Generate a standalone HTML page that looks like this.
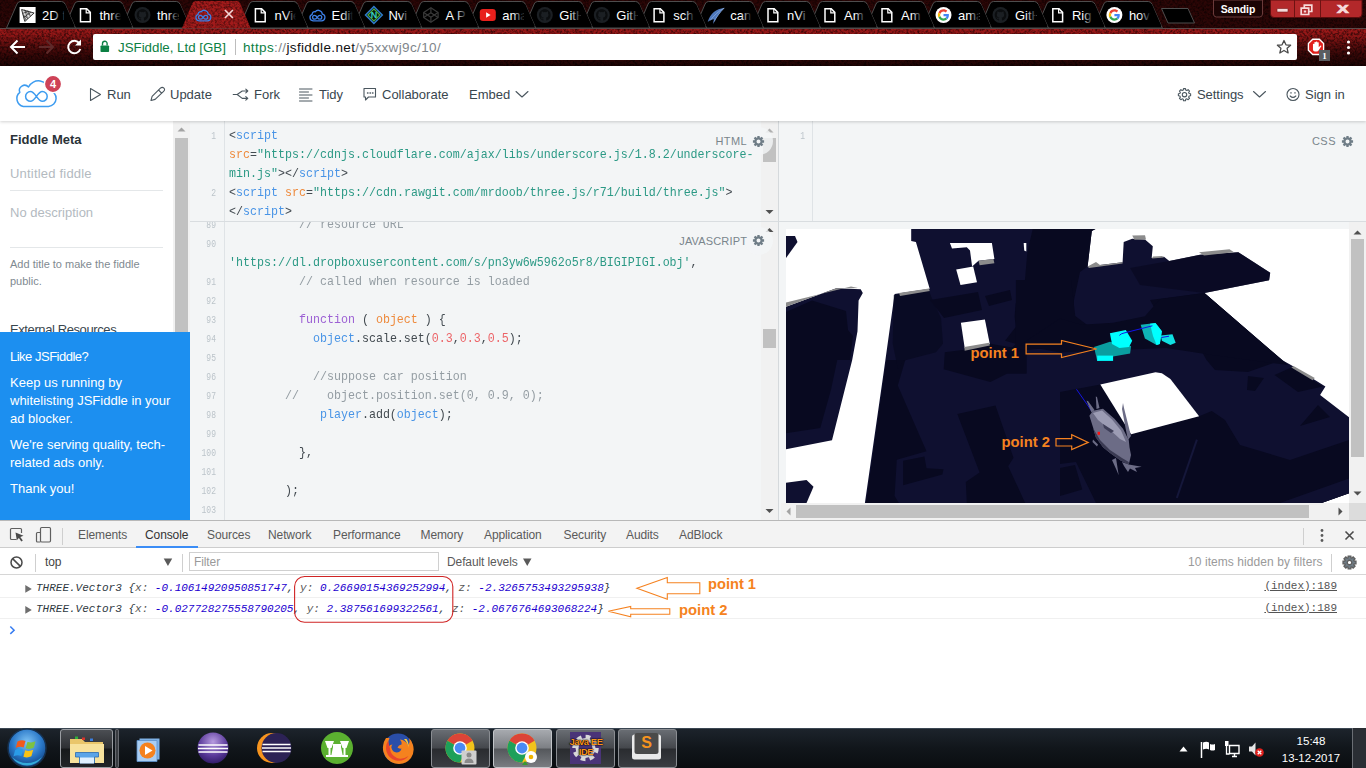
<!DOCTYPE html>
<html lang="en">
<head>
<meta charset="utf-8">
<title>JSFiddle</title>
<style>
*{box-sizing:border-box;margin:0;padding:0}
html,body{width:1366px;height:768px;overflow:hidden;background:#fff;font-family:"Liberation Sans",sans-serif}
.abs{position:absolute}
#root{position:relative;width:1366px;height:768px;overflow:hidden}
/* ---------- browser chrome ---------- */
#tabstrip{left:0;top:0;width:1366px;height:29px;background:#3a0606}
#toolbar{left:0;top:29px;width:1366px;height:37px;background:linear-gradient(#8a1414,#6d0e0e 45%,#4a0808)}
.noise{left:0;top:0;width:1366px;height:66px;opacity:.55;mix-blend-mode:multiply}
#omni{left:93px;top:34px;width:1204px;height:26px;background:#fff;border-radius:2px}
.tabtxt{position:absolute;top:7px;font-size:13px;color:#fff;white-space:nowrap;overflow:hidden}
/* ---------- jsfiddle header ---------- */
#jfhead{left:0;top:66px;width:1366px;height:55px;background:#fff;box-shadow:0 1px 3px rgba(0,0,0,.18);z-index:5}
.nav{position:absolute;top:21px;font-size:13px;color:#39464e;white-space:nowrap}
/* ---------- sidebar ---------- */
#side{left:0;top:121px;width:173px;height:399px;background:#fff;overflow:hidden}
#sidescroll{left:173px;top:121px;width:17px;height:399px;background:#f1f1f1}
#ad{left:0;top:332px;width:190px;height:188px;background:#1c8ff0;color:#fff;font-size:13px;line-height:18px;z-index:3}
/* ---------- editors ---------- */
.panel{background:#f3f5f6;overflow:hidden}
.gutter{position:absolute;left:0;top:0;bottom:0;width:35px;background:#f3f5f6;border-right:1px solid #dfe3e6}
.code{font-family:"Liberation Mono",monospace;font-size:12.7px;line-height:19px;color:#424a50;white-space:pre;transform:scaleX(.9186);transform-origin:0 0}
.ln{position:absolute;left:0;width:26px;text-align:right;font-family:"Liberation Mono",monospace;font-size:10.3px;color:#bcc4ca;line-height:21px;transform:scaleX(.78);transform-origin:100% 0}
.cl{position:absolute;left:39px;height:19px}
.t{color:#4894e6}.a{color:#ee8a3c}.s{color:#2b9985}.k{color:#9c60d4}.c{color:#949da3}.n{color:#ec6468}.v{color:#4894e6}.d{color:#ee8a3c}
.plabel{position:absolute;font-size:11px;letter-spacing:.6px;color:#7a858c}
/* ---------- devtools ---------- */
#dev{left:0;top:520px;width:1366px;height:208px;background:#fff;z-index:6}
.dtab{position:absolute;top:6.5px;letter-spacing:-.1px;font-size:12px;color:#5a5a5a;white-space:nowrap}
.crow{position:absolute;left:0;width:1366px;border-bottom:1px solid #f0f0f0;font-family:"Liberation Mono",monospace;font-size:11px;font-style:italic;color:#303942;white-space:pre}
.num{color:#1c00cf}.key{color:#565656}
.idx{position:absolute;right:29px;font-family:"Liberation Mono",monospace;font-size:11px;color:#545454;text-decoration:underline;font-style:normal}
/* ---------- taskbar ---------- */
#task{left:0;top:728px;width:1366px;height:40px;background:linear-gradient(#4a5866 0,#1c232b 1.5px,#11161b 50%,#0a0d10);z-index:7}
</style>
</head>
<body>
<div id="root">

<!-- ======= BROWSER CHROME ======= -->
<svg class="abs" style="left:0;top:0" width="1366" height="66" viewBox="0 0 1366 66">
<defs>
<filter id="nz" x="0" y="0" width="100%" height="100%"><feTurbulence type="fractalNoise" baseFrequency="0.45" numOctaves="3" seed="7" result="n"/><feColorMatrix type="matrix" values="0 0 0 0 0  0 0 0 0 0  0 0 0 0 0  2.4 0 0 0 -0.9"/></filter>
<linearGradient id="tbg" x1="0" y1="0" x2="0" y2="1"><stop offset="0" stop-color="#a01919"/><stop offset=".18" stop-color="#8e1616"/><stop offset=".42" stop-color="#600e0e"/><stop offset=".68" stop-color="#3a0808"/><stop offset="1" stop-color="#1e0404"/></linearGradient>
<linearGradient id="fade" x1="0" y1="0" x2="1" y2="0"><stop offset="0" stop-color="#000" stop-opacity="0"/><stop offset="1" stop-color="#000"/></linearGradient>
</defs>
<rect x="0" y="0" width="1366" height="29" fill="#2c0606"/>
<rect x="0" y="28.5" width="1366" height="37.5" fill="url(#tbg)"/>
<rect x="0" y="0" width="1366" height="66" filter="url(#nz)" opacity=".6"/>
<path d="M0 28.5H1366" stroke="#5a4a4a" stroke-width="1"/>
<clipPath id="tc0"><path d="M6.5 28 L17.0 4.0 Q18.0 1.5 20.5 1.5 L61.5 1.5 Q64.0 1.5 65.0 4.0 L75.5 28 Z"/></clipPath>
<clipPath id="tc1"><path d="M64.0 28 L74.5 4.0 Q75.5 1.5 78.0 1.5 L119.0 1.5 Q121.5 1.5 122.5 4.0 L132.9 28 Z"/></clipPath>
<clipPath id="tc2"><path d="M121.4 28 L131.9 4.0 Q132.9 1.5 135.4 1.5 L176.4 1.5 Q178.9 1.5 179.9 4.0 L190.4 28 Z"/></clipPath>
<clipPath id="tc3"><path d="M181.8 28.5 L192.3 3.5 Q193.3 1 195.8 1 L236.8 1 Q239.3 1 240.3 3.5 L250.8 28.5 Z"/></clipPath>
<clipPath id="tc4"><path d="M238.9 28 L249.4 4.0 Q250.4 1.5 252.9 1.5 L293.9 1.5 Q296.4 1.5 297.4 4.0 L307.9 28 Z"/></clipPath>
<clipPath id="tc5"><path d="M295.9 28 L306.4 4.0 Q307.4 1.5 309.9 1.5 L350.9 1.5 Q353.4 1.5 354.4 4.0 L364.9 28 Z"/></clipPath>
<clipPath id="tc6"><path d="M352.8 28 L363.3 4.0 Q364.3 1.5 366.8 1.5 L407.8 1.5 Q410.3 1.5 411.3 4.0 L421.8 28 Z"/></clipPath>
<clipPath id="tc7"><path d="M409.8 28 L420.3 4.0 Q421.3 1.5 423.8 1.5 L464.8 1.5 Q467.3 1.5 468.3 4.0 L478.8 28 Z"/></clipPath>
<clipPath id="tc8"><path d="M466.7 28 L477.2 4.0 Q478.2 1.5 480.7 1.5 L521.7 1.5 Q524.2 1.5 525.2 4.0 L535.7 28 Z"/></clipPath>
<clipPath id="tc9"><path d="M523.7 28 L534.2 4.0 Q535.2 1.5 537.7 1.5 L578.7 1.5 Q581.2 1.5 582.2 4.0 L592.7 28 Z"/></clipPath>
<clipPath id="tc10"><path d="M580.7 28 L591.2 4.0 Q592.2 1.5 594.7 1.5 L635.7 1.5 Q638.2 1.5 639.2 4.0 L649.7 28 Z"/></clipPath>
<clipPath id="tc11"><path d="M637.6 28 L648.1 4.0 Q649.1 1.5 651.6 1.5 L692.6 1.5 Q695.1 1.5 696.1 4.0 L706.6 28 Z"/></clipPath>
<clipPath id="tc12"><path d="M694.6 28 L705.1 4.0 Q706.1 1.5 708.6 1.5 L749.6 1.5 Q752.1 1.5 753.1 4.0 L763.6 28 Z"/></clipPath>
<clipPath id="tc13"><path d="M751.5 28 L762.0 4.0 Q763.0 1.5 765.5 1.5 L806.5 1.5 Q809.0 1.5 810.0 4.0 L820.5 28 Z"/></clipPath>
<clipPath id="tc14"><path d="M808.5 28 L819.0 4.0 Q820.0 1.5 822.5 1.5 L863.5 1.5 Q866.0 1.5 867.0 4.0 L877.5 28 Z"/></clipPath>
<clipPath id="tc15"><path d="M865.5 28 L876.0 4.0 Q877.0 1.5 879.5 1.5 L920.5 1.5 Q923.0 1.5 924.0 4.0 L934.5 28 Z"/></clipPath>
<clipPath id="tc16"><path d="M922.4 28 L932.9 4.0 Q933.9 1.5 936.4 1.5 L977.4 1.5 Q979.9 1.5 980.9 4.0 L991.4 28 Z"/></clipPath>
<clipPath id="tc17"><path d="M979.4 28 L989.9 4.0 Q990.9 1.5 993.4 1.5 L1034.4 1.5 Q1036.9 1.5 1037.9 4.0 L1048.4 28 Z"/></clipPath>
<clipPath id="tc18"><path d="M1036.3 28 L1046.8 4.0 Q1047.8 1.5 1050.3 1.5 L1091.3 1.5 Q1093.8 1.5 1094.8 4.0 L1105.3 28 Z"/></clipPath>
<clipPath id="tc19"><path d="M1093.3 28 L1103.8 4.0 Q1104.8 1.5 1107.3 1.5 L1148.3 1.5 Q1150.8 1.5 1151.8 4.0 L1162.3 28 Z"/></clipPath>
<path d="M1093.3 28 L1103.8 4.0 Q1104.8 1.5 1107.3 1.5 L1148.3 1.5 Q1150.8 1.5 1151.8 4.0 L1162.3 28 Z" fill="#000" stroke="#4d4d4d" stroke-width="1"/>
<g clip-path="url(#tc19)">
<g transform="translate(1114.4 15)"><circle r="8" fill="#fff"/><g transform="translate(-5.640 -5.640) scale(.235)"><path fill="#ea4335" d="M24 9.500c3.540 0 6.710 1.220 9.210 3.600l6.850-6.850C35.900 2.380 30.470 0 24 0 14.620 0 6.510 5.380 2.560 13.220l7.980 6.190C12.430 13.720 17.740 9.500 24 9.500z"/><path fill="#4285f4" d="M46.980 24.550c0-1.570-.150-3.090-.380-4.550H24v9.020h12.940c-.580 2.960-2.260 5.480-4.780 7.180l7.730 6c4.510-4.180 7.090-10.360 7.090-17.650z"/><path fill="#fbbc05" d="M10.530 28.590c-.480-1.450-.760-2.990-.760-4.590s.270-3.140.760-4.590l-7.980-6.190C.920 16.460 0 20.120 0 24c0 3.880.920 7.540 2.560 10.780l7.970-6.190z"/><path fill="#34a853" d="M24 48c6.480 0 11.930-2.130 15.890-5.810l-7.730-6c-2.150 1.450-4.920 2.300-8.160 2.300-6.260 0-11.570-4.220-13.470-9.910l-7.980 6.190C6.510 42.620 14.620 48 24 48z"/></g></g>
<text x="1128.9" y="19.5" font-size="13" fill="#fff" font-family="Liberation Sans,sans-serif">hov</text>
<rect x="1139.4" y="4" width="11" height="22" fill="url(#fade)"/>
<rect x="1150.4" y="4" width="30" height="22" fill="#000"/>
</g>
<path d="M1036.3 28 L1046.8 4.0 Q1047.8 1.5 1050.3 1.5 L1091.3 1.5 Q1093.8 1.5 1094.8 4.0 L1105.3 28 Z" fill="#000" stroke="#4d4d4d" stroke-width="1"/>
<g clip-path="url(#tc18)">
<path d="M1052.8 8.800h6.200l3.600 3.600v9.400h-9.800z" fill="none" stroke="#fff" stroke-width="1.500" stroke-linejoin="miter"/><path d="M1058.6 8.800v4h4" fill="none" stroke="#fff" stroke-width="1.200"/>
<text x="1071.9" y="19.5" font-size="13" fill="#fff" font-family="Liberation Sans,sans-serif">Rig</text>
<rect x="1082.4" y="4" width="11" height="22" fill="url(#fade)"/>
<rect x="1093.4" y="4" width="30" height="22" fill="#000"/>
</g>
<path d="M979.4 28 L989.9 4.0 Q990.9 1.5 993.4 1.5 L1034.4 1.5 Q1036.9 1.5 1037.9 4.0 L1048.4 28 Z" fill="#000" stroke="#4d4d4d" stroke-width="1"/>
<g clip-path="url(#tc17)">
<g transform="translate(992.5 7)"><circle cx="8" cy="8" r="8" fill="#1b1f23"/><path d="M8 2.200c-3.200 0-5.800 2.600-5.800 5.800 0 2.600 1.700 4.700 4 5.500.3.050.4-.13.4-.28v-1c-1.600.35-2-.77-2-.77-.26-.67-.64-.85-.64-.85-.52-.36.040-.35.040-.35.580.040.890.600.890.600.520.890 1.350.630 1.680.480.050-.370.200-.630.360-.770-1.290-.150-2.640-.640-2.640-2.860 0-.630.230-1.150.600-1.550-.060-.150-.260-.740.060-1.530 0 0 .490-.160 1.600.600a5.500 5.500 0 0 1 2.900 0c1.100-.750 1.600-.600 1.600-.600.320.800.120 1.390.060 1.530.370.400.600.920.600 1.550 0 2.230-1.360 2.720-2.650 2.860.210.180.390.530.390 1.070v1.590c0 .150.100.330.400.280a5.800 5.800 0 0 0 4-5.500c0-3.200-2.600-5.800-5.800-5.800z" fill="#0b0d0f"/></g>
<text x="1015.0" y="19.5" font-size="13" fill="#fff" font-family="Liberation Sans,sans-serif">GitH</text>
<rect x="1025.5" y="4" width="11" height="22" fill="url(#fade)"/>
<rect x="1036.5" y="4" width="30" height="22" fill="#000"/>
</g>
<path d="M922.4 28 L932.9 4.0 Q933.9 1.5 936.4 1.5 L977.4 1.5 Q979.9 1.5 980.9 4.0 L991.4 28 Z" fill="#000" stroke="#4d4d4d" stroke-width="1"/>
<g clip-path="url(#tc16)">
<g transform="translate(943.5 15)"><circle r="8" fill="#fff"/><g transform="translate(-5.640 -5.640) scale(.235)"><path fill="#ea4335" d="M24 9.500c3.540 0 6.710 1.220 9.210 3.600l6.850-6.850C35.900 2.380 30.470 0 24 0 14.620 0 6.510 5.380 2.560 13.220l7.980 6.190C12.430 13.720 17.740 9.500 24 9.500z"/><path fill="#4285f4" d="M46.980 24.550c0-1.570-.150-3.090-.380-4.550H24v9.020h12.940c-.580 2.960-2.260 5.480-4.780 7.180l7.730 6c4.510-4.180 7.090-10.360 7.090-17.650z"/><path fill="#fbbc05" d="M10.530 28.590c-.480-1.450-.760-2.990-.760-4.590s.270-3.140.760-4.590l-7.980-6.190C.920 16.460 0 20.120 0 24c0 3.880.920 7.540 2.560 10.780l7.970-6.190z"/><path fill="#34a853" d="M24 48c6.480 0 11.930-2.130 15.890-5.810l-7.730-6c-2.150 1.450-4.920 2.300-8.160 2.300-6.260 0-11.570-4.220-13.470-9.910l-7.980 6.190C6.510 42.620 14.620 48 24 48z"/></g></g>
<text x="958.0" y="19.5" font-size="13" fill="#fff" font-family="Liberation Sans,sans-serif">ama</text>
<rect x="968.5" y="4" width="11" height="22" fill="url(#fade)"/>
<rect x="979.5" y="4" width="30" height="22" fill="#000"/>
</g>
<path d="M865.5 28 L876.0 4.0 Q877.0 1.5 879.5 1.5 L920.5 1.5 Q923.0 1.5 924.0 4.0 L934.5 28 Z" fill="#000" stroke="#4d4d4d" stroke-width="1"/>
<g clip-path="url(#tc15)">
<path d="M882.0 8.800h6.200l3.600 3.600v9.400h-9.800z" fill="none" stroke="#fff" stroke-width="1.500" stroke-linejoin="miter"/><path d="M887.8 8.800v4h4" fill="none" stroke="#fff" stroke-width="1.200"/>
<text x="901.1" y="19.5" font-size="13" fill="#fff" font-family="Liberation Sans,sans-serif">Am</text>
<rect x="911.6" y="4" width="11" height="22" fill="url(#fade)"/>
<rect x="922.6" y="4" width="30" height="22" fill="#000"/>
</g>
<path d="M808.5 28 L819.0 4.0 Q820.0 1.5 822.5 1.5 L863.5 1.5 Q866.0 1.5 867.0 4.0 L877.5 28 Z" fill="#000" stroke="#4d4d4d" stroke-width="1"/>
<g clip-path="url(#tc14)">
<path d="M825.0 8.800h6.200l3.600 3.600v9.400h-9.800z" fill="none" stroke="#fff" stroke-width="1.500" stroke-linejoin="miter"/><path d="M830.8 8.800v4h4" fill="none" stroke="#fff" stroke-width="1.200"/>
<text x="844.1" y="19.5" font-size="13" fill="#fff" font-family="Liberation Sans,sans-serif">Am</text>
<rect x="854.6" y="4" width="11" height="22" fill="url(#fade)"/>
<rect x="865.6" y="4" width="30" height="22" fill="#000"/>
</g>
<path d="M751.5 28 L762.0 4.0 Q763.0 1.5 765.5 1.5 L806.5 1.5 Q809.0 1.5 810.0 4.0 L820.5 28 Z" fill="#000" stroke="#4d4d4d" stroke-width="1"/>
<g clip-path="url(#tc13)">
<path d="M768.0 8.800h6.200l3.600 3.600v9.400h-9.800z" fill="none" stroke="#fff" stroke-width="1.500" stroke-linejoin="miter"/><path d="M773.8 8.800v4h4" fill="none" stroke="#fff" stroke-width="1.200"/>
<text x="787.1" y="19.5" font-size="13" fill="#fff" font-family="Liberation Sans,sans-serif">nVi</text>
<rect x="797.6" y="4" width="11" height="22" fill="url(#fade)"/>
<rect x="808.6" y="4" width="30" height="22" fill="#000"/>
</g>
<path d="M694.6 28 L705.1 4.0 Q706.1 1.5 708.6 1.5 L749.6 1.5 Q752.1 1.5 753.1 4.0 L763.6 28 Z" fill="#000" stroke="#4d4d4d" stroke-width="1"/>
<g clip-path="url(#tc12)">
<g transform="translate(706.7 6.500)"><path d="M17.500 1.500C9.500 2 3.500 7 1 15.500c2.200-1.700 4.300-2.500 6.300-2.700C6.700 14.500 6.500 16 6.600 17.500 9.500 11 13.500 5.500 17.500 1.500z" fill="#4f79bd"/><path d="M17.500 1.500C12 4.500 7 9 3.500 14M17.500 1.500C13 6 9.500 11 7.500 15" stroke="#8fb0e0" stroke-width=".7" fill="none"/></g>
<text x="730.2" y="19.5" font-size="13" fill="#fff" font-family="Liberation Sans,sans-serif">can</text>
<rect x="740.7" y="4" width="11" height="22" fill="url(#fade)"/>
<rect x="751.7" y="4" width="30" height="22" fill="#000"/>
</g>
<path d="M637.6 28 L648.1 4.0 Q649.1 1.5 651.6 1.5 L692.6 1.5 Q695.1 1.5 696.1 4.0 L706.6 28 Z" fill="#000" stroke="#4d4d4d" stroke-width="1"/>
<g clip-path="url(#tc11)">
<path d="M654.1 8.800h6.200l3.600 3.600v9.400h-9.800z" fill="none" stroke="#fff" stroke-width="1.500" stroke-linejoin="miter"/><path d="M659.9 8.800v4h4" fill="none" stroke="#fff" stroke-width="1.200"/>
<text x="673.2" y="19.5" font-size="13" fill="#fff" font-family="Liberation Sans,sans-serif">sch</text>
<rect x="683.7" y="4" width="11" height="22" fill="url(#fade)"/>
<rect x="694.7" y="4" width="30" height="22" fill="#000"/>
</g>
<path d="M580.7 28 L591.2 4.0 Q592.2 1.5 594.7 1.5 L635.7 1.5 Q638.2 1.5 639.2 4.0 L649.7 28 Z" fill="#000" stroke="#4d4d4d" stroke-width="1"/>
<g clip-path="url(#tc10)">
<g transform="translate(593.8 7)"><circle cx="8" cy="8" r="8" fill="#1b1f23"/><path d="M8 2.200c-3.200 0-5.800 2.600-5.800 5.800 0 2.600 1.700 4.700 4 5.500.3.050.4-.13.4-.28v-1c-1.600.35-2-.77-2-.77-.26-.67-.64-.85-.64-.85-.52-.36.040-.35.040-.35.580.040.890.600.890.600.520.890 1.350.630 1.680.480.050-.370.200-.630.360-.770-1.290-.150-2.640-.640-2.640-2.860 0-.630.230-1.150.600-1.550-.060-.150-.260-.740.060-1.530 0 0 .490-.160 1.600.600a5.500 5.500 0 0 1 2.900 0c1.100-.750 1.600-.600 1.600-.600.320.800.120 1.390.060 1.530.370.400.600.920.600 1.550 0 2.230-1.360 2.720-2.650 2.860.210.180.390.530.390 1.070v1.590c0 .150.100.330.400.280a5.800 5.800 0 0 0 4-5.500c0-3.200-2.600-5.800-5.800-5.800z" fill="#0b0d0f"/></g>
<text x="616.3" y="19.5" font-size="13" fill="#fff" font-family="Liberation Sans,sans-serif">GitH</text>
<rect x="626.8" y="4" width="11" height="22" fill="url(#fade)"/>
<rect x="637.8" y="4" width="30" height="22" fill="#000"/>
</g>
<path d="M523.7 28 L534.2 4.0 Q535.2 1.5 537.7 1.5 L578.7 1.5 Q581.2 1.5 582.2 4.0 L592.7 28 Z" fill="#000" stroke="#4d4d4d" stroke-width="1"/>
<g clip-path="url(#tc9)">
<g transform="translate(536.8 7)"><circle cx="8" cy="8" r="8" fill="#1b1f23"/><path d="M8 2.200c-3.200 0-5.800 2.600-5.800 5.800 0 2.600 1.700 4.700 4 5.500.3.050.4-.13.4-.28v-1c-1.600.35-2-.77-2-.77-.26-.67-.64-.85-.64-.85-.52-.36.040-.35.040-.35.580.040.890.600.890.600.520.890 1.350.630 1.680.480.050-.370.200-.630.360-.770-1.290-.150-2.640-.640-2.640-2.860 0-.630.230-1.150.600-1.550-.060-.150-.260-.740.060-1.530 0 0 .490-.160 1.600.600a5.500 5.500 0 0 1 2.900 0c1.100-.750 1.600-.600 1.600-.600.320.800.120 1.390.060 1.530.370.400.600.920.600 1.550 0 2.230-1.360 2.720-2.650 2.860.210.180.390.530.390 1.070v1.590c0 .150.100.330.400.280a5.800 5.800 0 0 0 4-5.500c0-3.200-2.600-5.800-5.800-5.800z" fill="#0b0d0f"/></g>
<text x="559.3" y="19.5" font-size="13" fill="#fff" font-family="Liberation Sans,sans-serif">GitH</text>
<rect x="569.8" y="4" width="11" height="22" fill="url(#fade)"/>
<rect x="580.8" y="4" width="30" height="22" fill="#000"/>
</g>
<path d="M466.7 28 L477.2 4.0 Q478.2 1.5 480.7 1.5 L521.7 1.5 Q524.2 1.5 525.2 4.0 L535.7 28 Z" fill="#000" stroke="#4d4d4d" stroke-width="1"/>
<g clip-path="url(#tc8)">
<g transform="translate(479.8 9)"><rect width="16" height="12" rx="3.200" fill="#e8201c"/><path d="M6.300 3.200 10.800 6 6.300 8.800z" fill="#fff"/></g>
<text x="502.3" y="19.5" font-size="13" fill="#fff" font-family="Liberation Sans,sans-serif">ama</text>
<rect x="512.8" y="4" width="11" height="22" fill="url(#fade)"/>
<rect x="523.8" y="4" width="30" height="22" fill="#000"/>
</g>
<path d="M409.8 28 L420.3 4.0 Q421.3 1.5 423.8 1.5 L464.8 1.5 Q467.3 1.5 468.3 4.0 L478.8 28 Z" fill="#000" stroke="#4d4d4d" stroke-width="1"/>
<g clip-path="url(#tc7)">
<g transform="translate(422.9 7)" fill="none" stroke="#3a3a3a" stroke-width="1.200" stroke-linejoin="round"><path d="M8 .8 15.200 5.500v5L8 15.200.8 10.500v-5z"/><path d="M.8 5.500 8 10.200l7.200-4.700M.8 10.500 8 5.800l7.200 4.700M8 .8v5M8 10.200v5"/></g>
<text x="445.4" y="19.5" font-size="13" fill="#fff" font-family="Liberation Sans,sans-serif">A P</text>
<rect x="455.9" y="4" width="11" height="22" fill="url(#fade)"/>
<rect x="466.9" y="4" width="30" height="22" fill="#000"/>
</g>
<path d="M352.8 28 L363.3 4.0 Q364.3 1.5 366.8 1.5 L407.8 1.5 Q410.3 1.5 411.3 4.0 L421.8 28 Z" fill="#000" stroke="#4d4d4d" stroke-width="1"/>
<g clip-path="url(#tc6)">
<g transform="translate(373.9 15)"><path d="M0-8.500 8.500 0 0 8.500-8.500 0z" fill="#0c1c2c" stroke="#2f7fd0" stroke-width="1.300"/><path d="M0-6 6 0 0 6-6 0z" fill="#08140c" stroke="#4cae3a" stroke-width="1.100"/><text x="0" y="3.400" font-size="9" font-weight="bold" fill="#3ad0c0" text-anchor="middle" font-family="Liberation Sans,sans-serif">N</text></g>
<text x="388.4" y="19.5" font-size="13" fill="#fff" font-family="Liberation Sans,sans-serif">Nvi</text>
<rect x="398.9" y="4" width="11" height="22" fill="url(#fade)"/>
<rect x="409.9" y="4" width="30" height="22" fill="#000"/>
</g>
<path d="M295.9 28 L306.4 4.0 Q307.4 1.5 309.9 1.5 L350.9 1.5 Q353.4 1.5 354.4 4.0 L364.9 28 Z" fill="#000" stroke="#4d4d4d" stroke-width="1"/>
<g clip-path="url(#tc5)">
<g transform="translate(309.0 7.5)" fill="none" stroke="#3d7fe6" stroke-width="1.3" stroke-linecap="round" stroke-linejoin="round"><path d="M4 13.3A3.3 3.3 0 0 1 3.2 6.9A2.4 2.4 0 0 1 6.2 4.3A4 4 0 0 1 13.3 6.6A3.4 3.4 0 0 1 12.3 13.3Z"/><path d="M8.2 9.8C7.2 8.3 6.3 7.9 5.5 7.9A1.9 1.9 0 0 0 5.5 11.7C6.3 11.7 7.2 11.3 8.2 9.8C9.2 8.3 10.1 7.9 10.9 7.9A1.9 1.9 0 0 1 10.9 11.7C10.1 11.7 9.2 11.3 8.2 9.8z"/></g>
<text x="331.5" y="19.5" font-size="13" fill="#fff" font-family="Liberation Sans,sans-serif">Edit</text>
<rect x="342.0" y="4" width="11" height="22" fill="url(#fade)"/>
<rect x="353.0" y="4" width="30" height="22" fill="#000"/>
</g>
<path d="M238.9 28 L249.4 4.0 Q250.4 1.5 252.9 1.5 L293.9 1.5 Q296.4 1.5 297.4 4.0 L307.9 28 Z" fill="#000" stroke="#4d4d4d" stroke-width="1"/>
<g clip-path="url(#tc4)">
<path d="M255.4 8.800h6.200l3.600 3.600v9.400h-9.800z" fill="none" stroke="#fff" stroke-width="1.500" stroke-linejoin="miter"/><path d="M261.2 8.800v4h4" fill="none" stroke="#fff" stroke-width="1.200"/>
<text x="274.5" y="19.5" font-size="13" fill="#fff" font-family="Liberation Sans,sans-serif">nVie</text>
<rect x="285.0" y="4" width="11" height="22" fill="url(#fade)"/>
<rect x="296.0" y="4" width="30" height="22" fill="#000"/>
</g>
<path d="M121.4 28 L131.9 4.0 Q132.9 1.5 135.4 1.5 L176.4 1.5 Q178.9 1.5 179.9 4.0 L190.4 28 Z" fill="#000" stroke="#4d4d4d" stroke-width="1"/>
<g clip-path="url(#tc2)">
<g transform="translate(134.5 7)"><circle cx="8" cy="8" r="8" fill="#1b1f23"/><path d="M8 2.200c-3.200 0-5.800 2.600-5.800 5.800 0 2.600 1.700 4.700 4 5.500.3.050.4-.13.4-.28v-1c-1.600.35-2-.77-2-.77-.26-.67-.64-.85-.64-.85-.52-.36.040-.35.040-.35.580.040.890.600.890.600.520.890 1.350.630 1.680.480.050-.370.200-.630.360-.770-1.290-.150-2.640-.640-2.640-2.860 0-.630.230-1.150.600-1.550-.060-.150-.260-.740.060-1.530 0 0 .490-.160 1.600.600a5.500 5.500 0 0 1 2.900 0c1.100-.750 1.600-.600 1.600-.600.320.800.120 1.390.060 1.530.370.400.600.920.600 1.550 0 2.230-1.360 2.720-2.650 2.860.210.180.390.530.390 1.070v1.590c0 .150.100.330.400.280a5.800 5.800 0 0 0 4-5.500c0-3.200-2.600-5.800-5.800-5.800z" fill="#0b0d0f"/></g>
<text x="157.0" y="19.5" font-size="13" fill="#fff" font-family="Liberation Sans,sans-serif">thre</text>
<rect x="167.5" y="4" width="11" height="22" fill="url(#fade)"/>
<rect x="178.5" y="4" width="30" height="22" fill="#000"/>
</g>
<path d="M64.0 28 L74.5 4.0 Q75.5 1.5 78.0 1.5 L119.0 1.5 Q121.5 1.5 122.5 4.0 L132.9 28 Z" fill="#000" stroke="#4d4d4d" stroke-width="1"/>
<g clip-path="url(#tc1)">
<path d="M80.5 8.800h6.200l3.600 3.600v9.400h-9.800z" fill="none" stroke="#fff" stroke-width="1.500" stroke-linejoin="miter"/><path d="M86.2 8.800v4h4" fill="none" stroke="#fff" stroke-width="1.200"/>
<text x="99.5" y="19.5" font-size="13" fill="#fff" font-family="Liberation Sans,sans-serif">thre</text>
<rect x="110.0" y="4" width="11" height="22" fill="url(#fade)"/>
<rect x="121.0" y="4" width="30" height="22" fill="#000"/>
</g>
<path d="M6.5 28 L17.0 4.0 Q18.0 1.5 20.5 1.5 L61.5 1.5 Q64.0 1.5 65.0 4.0 L75.5 28 Z" fill="#000" stroke="#4d4d4d" stroke-width="1"/>
<g clip-path="url(#tc0)">
<g transform="translate(19.6 7)"><rect width="16" height="16" fill="#fff"/><path d="M2 2.500 14.500 6 5.200 14.500z" fill="#ddd" stroke="#222" stroke-width=".9"/><path d="M3 6.500 8.200 4.200M4.100 10.500 11.300 5.100M5.100 2.700 8 11.800M8.300 3.600 10.800 9.300M3.600 7.500 6.600 13.200M6.500 5 9.600 7.600M5 8.900 7.200 10.600" stroke="#222" stroke-width=".7" fill="none"/></g>
<text x="42.1" y="19.5" font-size="13" fill="#fff" font-family="Liberation Sans,sans-serif">2D f</text>
<rect x="52.6" y="4" width="11" height="22" fill="url(#fade)"/>
<rect x="63.6" y="4" width="30" height="22" fill="#000"/>
</g>
<path d="M181.8 28.5 L192.3 3.5 Q193.3 1 195.8 1 L236.8 1 Q239.3 1 240.3 3.5 L250.8 28.5 Z" fill="#a31b1b"/>
<rect x="170" y="0" width="100" height="30" filter="url(#nz)" opacity=".5" clip-path="url(#tc3)"/>
<g transform="translate(194.9 7.5)" fill="none" stroke="#3d7fe6" stroke-width="1.3" stroke-linecap="round" stroke-linejoin="round"><path d="M4 13.3A3.3 3.3 0 0 1 3.2 6.9A2.4 2.4 0 0 1 6.2 4.3A4 4 0 0 1 13.3 6.6A3.4 3.4 0 0 1 12.3 13.3Z"/><path d="M8.2 9.8C7.2 8.3 6.3 7.9 5.5 7.9A1.9 1.9 0 0 0 5.5 11.7C6.3 11.7 7.2 11.3 8.2 9.8C9.2 8.3 10.1 7.9 10.9 7.9A1.9 1.9 0 0 1 10.9 11.7C10.1 11.7 9.2 11.3 8.2 9.8z"/></g>
<path d="M224.9 10l8 8m0-8l-8 8" stroke="#f3d6d6" stroke-width="1.700" fill="none"/>
<path d="M1161.500 8.500h26.500l6.500 14.500h-26.500z" fill="#000" stroke="#4d4d4d" stroke-width="1"/>
<path d="M1213.500 0v14q0 3 3 3h43q3 0 3-3v-14z" fill="#1a0404" stroke="#6a3a3a" stroke-width="1"/>
<text x="1238" y="12.500" font-size="10.4" font-weight="bold" fill="#fff" text-anchor="middle" font-family="Liberation Sans,sans-serif">Sandip</text>
<path d="M1270.500 0v14q0 3.500 3.500 3.500h84.500q3.500 0 3.500-3.500v-14z" fill="#b3282a" stroke="#5a0d0d" stroke-width="1"/>
<path d="M1294.500 0v17M1320.500 0v17" stroke="#6d1212" stroke-width="1"/>
<rect x="1277" y="8.500" width="11" height="3.500" rx=".8" fill="#f6dada" stroke="#7a1a1a" stroke-width=".6"/>
<path d="M1304.300 8V5.200h7.500v6.300h-2.800" fill="none" stroke="#f6dada" stroke-width="1.700"/><path d="M1301.200 8.200h7.500v6.300h-7.500z" fill="none" stroke="#f6dada" stroke-width="1.700"/><rect x="1303.800" y="10.500" width="2.400" height="2" fill="#f6dada"/>
<text transform="translate(1342.800 12.800) scale(1.300 .820)" x="0" y="0" font-size="13.500" font-weight="bold" fill="#f6dada" text-anchor="middle" font-family="Liberation Sans,sans-serif" stroke="#f6dada" stroke-width=".9">X</text>
<path d="M25 47H11.500M17.500 40.500 11 47l6.500 6.500" fill="none" stroke="#fff" stroke-width="2"/>
<path d="M39 47h13.500M46.500 40.500 53 47l-6.500 6.500" fill="none" stroke="#5e2a2a" stroke-width="2"/>
<path d="M79.500 43.500A6.200 6.200 0 1 0 80.300 49" fill="none" stroke="#fff" stroke-width="2"/><path d="M81 39.500v6h-6z" fill="#fff"/>
<rect x="93" y="34" width="1204" height="26" rx="2" fill="#fff"/>
<path d="M102.500 45.500v-2a2.300 2.300 0 0 1 4.600 0v2" fill="none" stroke="#0b8043" stroke-width="1.400"/><rect x="100.500" y="45.500" width="8.600" height="6.500" rx=".8" fill="#0b8043"/>
<text x="118" y="52" font-size="13.3" fill="#0b8043" font-family="Liberation Sans,sans-serif">JSFiddle, Ltd [GB]</text>
<path d="M235.500 39v16" stroke="#bdbdbd" stroke-width="1"/>
<text x="243" y="52" font-size="13.5" letter-spacing=".36" font-family="Liberation Sans,sans-serif"><tspan fill="#0b8043">https</tspan><tspan fill="#80868b">://</tspan><tspan fill="#111">jsfiddle.net</tspan><tspan fill="#80868b">/y5xxwj9c/10/</tspan></text>
<path d="M1284 40.500l1.950 4.300 4.650.45-3.500 3.100 1.050 4.600-4.150-2.450-4.150 2.450 1.050-4.600-3.500-3.100 4.650-.45z" fill="none" stroke="#4a4a4a" stroke-width="1.300" stroke-linejoin="round"/>
<g transform="translate(1316 46.900) scale(.8)"><path d="M-4.100-9.500h8.200l5.400 5.400v8.200l-5.400 5.400h-8.200l-5.400-5.400v-8.200z" fill="#e0201c" stroke="#fff" stroke-width="1.700"/><path d="M-3.800 3v-6.500q.9-.9 1.800 0v-2.300q.9-.9 1.800 0v-.6q.9-.9 1.800 0v.9q.9-.8 1.800 0v6l1.900-2q1.100-.6 1.500.5l-3.400 5.200q-.9 1.500-2.700 1.500h-2.100q-2.400 0-2.400-2.400z" fill="#fff"/></g>
<rect x="1319" y="50" width="11" height="11" fill="#5a5d61"/><text x="1324.500" y="59" font-size="9" fill="#fff" text-anchor="middle" font-family="Liberation Serif,serif" font-weight="bold">1</text>
<circle cx="1348.500" cy="42" r="1.600" fill="#fff"/><circle cx="1348.500" cy="47.500" r="1.600" fill="#fff"/><circle cx="1348.500" cy="53" r="1.600" fill="#fff"/>
</svg>


<!-- ======= JSFIDDLE HEADER ======= -->
<div id="jfhead" class="abs">
<svg class="abs" style="left:0;top:0" width="1366" height="55" viewBox="0 0 1366 55" fill="none" stroke="#4a565e" stroke-width="1.1" stroke-linecap="round" stroke-linejoin="round">
<!-- logo cloud -->
<g stroke="#3d9cf0" stroke-width="1.5">
<path d="M23.300 40.400A8 8 0 0 1 19.800 26.400A5.200 5.200 0 0 1 28.500 21A11 11 0 0 1 49.300 24.500A8 8 0 0 1 48.500 40.400Z"/>
<path d="M36.400 30.400C34 27 32.500 25.500 30.500 25.500A4.900 4.900 0 0 0 30.500 35.300C32.500 35.300 34 33.800 36.400 30.400C38.800 27 40.300 25.500 42.300 25.500A4.900 4.900 0 0 1 42.300 35.300C40.300 35.300 38.800 33.800 36.400 30.400z"/>
</g>
<circle cx="53" cy="18" r="8.600" fill="#ce4257" stroke="#fff" stroke-width="1.400"/>
<!-- run -->
<path d="M90.500 22.500v12l10-6z"/>
<!-- update pencil -->
<path d="M151 34.500 152.100 30.400 160.400 22.100Q162.300 20.600 163.900 22.200 165.400 23.800 163.600 25.300L155.100 33.400zM158.500 24 161.600 27.100"/>
<!-- fork -->
<path d="M233.200 28.500h4l5-3.500h5.200M237.200 28.500l5 3.900h5.200M245.800 23.200l2 1.800-2 1.800M245.800 30.600l2 1.800-2 1.800"/>
<!-- tidy -->
<path d="M299.500 23h12.500M299.500 26h9M299.500 29h12.500M299.500 32h9M299.500 35h12.500" stroke-width="1"/>
<!-- collaborate -->
<path d="M364 22.500h11.500v8.500h-7l-3 3v-3h-1.500z"/><path d="M367.500 27h.5M370 27h.5M372.500 27h.5" stroke-width="1.400"/>
<!-- embed chevron -->
<path d="M516 25.500l6 5.500 6-5.500"/>
<!-- settings gear -->
<g transform="translate(1184.500 28.700)"><circle r="2.200"/><path d="M-1.23 -4.64 -0.99 -6.12 0.99 -6.12 1.23 -4.64 2.41 -4.15 3.63 -5.03 5.03 -3.63 4.15 -2.41 4.64 -1.23 6.12 -0.99 6.12 0.99 4.64 1.23 4.15 2.41 5.03 3.63 3.63 5.03 2.41 4.15 1.23 4.64 0.99 6.12 -0.99 6.12 -1.23 4.64 -2.41 4.15 -3.63 5.03 -5.03 3.63 -4.15 2.41 -4.64 1.23 -6.12 0.99 -6.12 -0.99 -4.64 -1.23 -4.15 -2.41 -5.03 -3.63 -3.63 -5.03 -2.41 -4.15z" stroke-width="1.100"/></g>
<path d="M1253.500 25.500l6 5.500 6-5.500"/>
<!-- smile -->
<g transform="translate(1293 28.500)"><circle r="6"/><path d="M-2.800 1.500q2.800 2.800 5.600 0"/><path d="M-2-1.800v.3M2-1.800v.3" stroke-width="1.300"/></g>
</svg>
<span class="abs" style="left:49.500px;top:12px;font-size:11px;font-weight:bold;color:#fff;line-height:12px;width:7px;text-align:center">4</span>
<span class="nav" style="left:107px">Run</span>
<span class="nav" style="left:170px">Update</span>
<span class="nav" style="left:254px">Fork</span>
<span class="nav" style="left:319px">Tidy</span>
<span class="nav" style="left:382px">Collaborate</span>
<span class="nav" style="left:469px">Embed</span>
<span class="nav" style="left:1197px;letter-spacing:-.05px">Settings</span>
<span class="nav" style="left:1305px">Sign in</span>
</div>


<!-- ======= SIDEBAR ======= -->
<div id="side" class="abs">
<div class="abs" style="left:10px;top:10.500px;font-size:13px;font-weight:bold;color:#2a3238;white-space:nowrap">Fiddle Meta</div>
<div class="abs" style="left:10px;top:45px;font-size:13px;color:#b3babf;white-space:nowrap;letter-spacing:.2px">Untitled fiddle</div>
<div class="abs" style="left:10px;top:69px;width:153px;height:1px;background:#e4e7e9"></div>
<div class="abs" style="left:10px;top:84px;font-size:13px;color:#b3babf;white-space:nowrap">No description</div>
<div class="abs" style="left:10px;top:126px;width:153px;height:1px;background:#e4e7e9"></div>
<div class="abs" style="left:10px;top:135px;font-size:11px;line-height:17px;color:#7f8a91;white-space:nowrap">Add title to make the fiddle<br>public.</div>
<div class="abs" style="left:10px;top:200.500px;font-size:13px;color:#39464e;white-space:nowrap;letter-spacing:-.4px">External Resources</div>
</div>
<div id="sidescroll" class="abs">
<div class="abs" style="left:2px;top:17px;width:13px;height:382px;background:#c1c1c1"></div>
<svg class="abs" style="left:0;top:0" width="17" height="17"><path d="M4.500 10.500l4-4 4 4z" fill="#a3a3a3"/></svg>
</div>
<div id="ad" class="abs">
<div class="abs" style="left:10px;top:16px;white-space:nowrap;letter-spacing:-.5px">Like JSFiddle?</div>
<div class="abs" style="left:10px;top:42px;white-space:nowrap">Keep us running by<br>whitelisting JSFiddle in your<br>ad blocker.</div>
<div class="abs" style="left:10px;top:104px;white-space:nowrap">We're serving quality, tech-<br>related ads only.</div>
<div class="abs" style="left:10px;top:148px;white-space:nowrap">Thank you!</div>
</div>


<!-- ======= EDITORS ======= -->
<div id="phtml" class="abs panel" style="left:190px;top:121px;width:588px;height:101px;border-bottom:1px solid #d9dde0">
<div class="gutter"></div>
<div class="ln" style="top:5px">1</div>
<div class="ln" style="top:62px">2</div>
<div class="cl code" style="top:5px">&lt;<span class="t">script</span></div>
<div class="cl code" style="top:24px"><span class="a">src</span>=<span class="s">"https://cdnjs.cloudflare.com/ajax/libs/underscore.js/1.8.2/underscore-</span></div>
<div class="cl code" style="top:43px"><span class="s">min.js"</span>&gt;&lt;/<span class="t">script</span>&gt;</div>
<div class="cl code" style="top:62px">&lt;<span class="t">script</span> <span class="a">src</span>=<span class="s">"https://cdn.rawgit.com/mrdoob/three.js/r71/build/three.js"</span>&gt;</div>
<div class="cl code" style="top:81px">&lt;/<span class="t">script</span>&gt;</div>
<div class="abs" style="left:571px;top:0;width:17px;height:100px;background:#f1f1f1"><div class="abs" style="left:2px;top:17px;width:13px;height:24px;background:#c1c1c1"></div><svg class="abs" style="left:0;top:0" width="17" height="100"><path d="M4.500 11.500l4-4 4 4z" fill="#b0b0b0"/><path d="M4.500 89l4 4 4-4z" fill="#505050"/></svg></div>
<div class="abs" style="left:554.500px;top:6px;width:28px;height:28px;border-radius:14px;background:rgba(243,245,246,.82)"></div>
<div class="plabel" style="right:31px;top:13.500px;letter-spacing:.4px">HTML</div>
<svg class="abs gear" style="left:562px;top:13.500px" width="13" height="13" viewBox="-6.500 -6.500 13 13"><use href="#gear"/></svg>
</div>
<div id="pjs" class="abs panel" style="left:190px;top:222px;width:588px;height:298px">
<div class="gutter"></div>
<div class="ln" style="top:-7.5px">89</div>
<div class="cl code" style="top:-7.5px">          <span class="c">// resource URL</span></div>
<div class="ln" style="top:11.5px">90</div>
<div class="cl code" style="top:30.5px"><span class="s">'https://dl.dropboxusercontent.com/s/pn3yw6w5962o5r8/BIGIPIGI.obj'</span>,</div>
<div class="ln" style="top:49.5px">91</div>
<div class="cl code" style="top:49.5px">          <span class="c">// called when resource is loaded</span></div>
<div class="ln" style="top:68.5px">92</div>
<div class="ln" style="top:87.5px">93</div>
<div class="cl code" style="top:87.5px">          <span class="k">function</span> ( <span class="d">object</span> ) {</div>
<div class="ln" style="top:106.5px">94</div>
<div class="cl code" style="top:106.5px">            <span class="v">object</span>.scale.set(<span class="n">0.3</span>,<span class="n">0.3</span>,<span class="n">0.5</span>);</div>
<div class="ln" style="top:125.5px">95</div>
<div class="ln" style="top:144.5px">96</div>
<div class="cl code" style="top:144.5px">            <span class="c">//suppose car position</span></div>
<div class="ln" style="top:163.5px">97</div>
<div class="cl code" style="top:163.5px">        <span class="c">//    object.position.set(0, 0.9, 0);</span></div>
<div class="ln" style="top:182.5px">98</div>
<div class="cl code" style="top:182.5px">             <span class="v">player</span>.add(<span class="v">object</span>);</div>
<div class="ln" style="top:201.5px">99</div>
<div class="ln" style="top:220.5px">100</div>
<div class="cl code" style="top:220.5px">          },</div>
<div class="ln" style="top:239.5px">101</div>
<div class="ln" style="top:258.5px">102</div>
<div class="cl code" style="top:258.5px">        );</div>
<div class="ln" style="top:277.5px">103</div>
<div class="abs" style="left:571px;top:0;width:17px;height:298px;background:#f1f1f1"><div class="abs" style="left:2px;top:107px;width:13px;height:19px;background:#c1c1c1"></div><svg class="abs" style="left:0;top:0" width="17" height="298"><path d="M4.500 10l4-4 4 4z" fill="#505050"/><path d="M4.500 287l4 4 4-4z" fill="#505050"/></svg></div>
<div class="abs" style="left:554.500px;top:5px;width:28px;height:28px;border-radius:14px;background:rgba(243,245,246,.82)"></div>
<div class="plabel" style="right:31px;top:12.500px;letter-spacing:.15px">JAVASCRIPT</div>
<svg class="abs gear" style="left:562px;top:12px" width="13" height="13" viewBox="-6.500 -6.500 13 13"><use href="#gear"/></svg>
</div>
<div id="pcss" class="abs panel" style="left:778px;top:121px;width:588px;height:101px;border-left:1px solid #d5d9dc;border-bottom:1px solid #d9dde0">
<div class="gutter" style="width:34px"></div>
<div class="ln" style="top:5px;width:26px">1</div>
<div class="plabel" style="right:30px;top:13.500px;letter-spacing:.5px">CSS</div>
<svg class="abs gear" style="left:561.500px;top:14px" width="13" height="13" viewBox="-6.500 -6.500 13 13"><use href="#gear"/></svg>
</div>
<svg width="0" height="0" style="position:absolute"><defs><g id="gear"><path fill="#6f7d87" fill-rule="evenodd" d="M-1.24 -4.01 -1.13 -5.59 1.13 -5.59 1.24 -4.01 1.96 -3.71 3.15 -4.75 4.75 -3.15 3.71 -1.96 4.01 -1.24 5.59 -1.13 5.59 1.13 4.01 1.24 3.71 1.96 4.75 3.15 3.15 4.75 1.96 3.71 1.24 4.01 1.13 5.59 -1.13 5.59 -1.24 4.01 -1.96 3.71 -3.15 4.75 -4.75 3.15 -3.71 1.96 -4.01 1.24 -5.59 1.13 -5.59 -1.13 -4.01 -1.24 -3.71 -1.96 -4.75 -3.15 -3.15 -4.75 -1.96 -3.71zM0-2a2 2 0 1 0 0 4 2 2 0 1 0 0-4z"/></g></defs></svg>

<div id="pres" class="abs" style="left:778px;top:222px;width:588px;height:298px;background:#f3f5f6;border-left:1px solid #d5d9dc">
</div>
<svg class="abs" style="left:786px;top:229px" width="563" height="274" viewBox="786 229 563 274">
<rect x="786" y="229" width="563" height="274" fill="#fff"/>
<g fill="#0f1030">
<path d="M786 236H795L797.500 242 786 258z"/>
<path d="M786 306.700 811.800 297.200 836.300 288.300 860.700 289.300 862.800 293 858.600 300.400 857.500 331.200 852.200 360 832 440.300 786 449.200z"/>
<path d="M786 482.700 806.500 480 813.500 486.800 806.500 503 786 503z"/>
<path d="M911.200 229H1095.500L1091.800 231 1087.600 266.400 1122.600 262.200 1123.700 242 1132.200 238.800 1145 239.400 1152.800 246.200 1151.700 257.900 1164 256.800 1169.300 261.100 1200.100 254.700 1238.300 252.200 1270.200 272.800 1269.100 280.200 1204.400 292.900 1281.900 360 1291.400 365.300 1325.400 386.500 1320.100 395 1349 417.300V493.300L1321.500 503H864.900L884 370 894.600 294 929.700 288.700 915.900 242 911.200 241z"/>
</g>
<!-- darker shade areas -->
<g fill="#080920">
<path d="M786 360H837.300L831 389.700 820.300 428 786 433.200z"/>
<path d="M786 312 812 300.500 846 311 848 330 853 336 850 360H786z"/>
<path d="M1032.700 229H1095.500L1091.800 231 1087.600 266.400 1080 272 1074 300 1073 315 1060 322 1020 345 1005 340.700 1015.700 326.900 1014.600 316.300 1015.700 303.600 1024.200 288.700 1027.300 252.600z"/>
<path d="M886.200 360 905.300 360 897.800 385.500 926.500 451.300 896.800 459.800 894.600 495.900 898.900 503 866 503z"/>
<path d="M957.300 414.100 995.500 405.600 1013.500 457.700 1008.200 466.200 1025.200 503 966.800 503 965.800 482 979.600 472.500z"/>
<path d="M903.100 460.800 924.400 456.600 926.500 468.300 943.500 469.300 942.400 474.600 903.100 485.300z"/>
<path d="M1060 392 1100.300 384.400 1131.100 434.300 1199.100 416.300 1211.800 411 1225 420 1240 445 1290 460 1349 440V493.300L1321.500 503H1096L1076 462 1060 464z"/>
<path d="M1204.400 292.900 1269.100 280.200 1270.200 272.800 1238.300 252.200 1200.100 254.700 1169.300 261.100 1130 268 1140 285z" opacity=".7"/>
<path d="M1204.400 292.900 1281.900 360 1248 372 1215 370 1206.500 360 1190 330 1160 318 1150 300z"/>
<path d="M1060 468 1075 465 1082.300 489.500 1060 496z"/>
<path d="M1015.900 280 1071.100 280 1075.300 316.100 1092.300 328.800 1094.400 343.700 1026.500 350.100 1026.500 373.400 1007.400 373.400 998.900 360.700 1015.900 343.700 1015.900 301.200z"/>
<path d="M962.800 350.100 990.400 343.700 1026.500 350.100 1026.500 373.400 1007.400 373.400 990.400 381.900 943.700 369.200 944.800 352.200z"/>
<path d="M893.800 294.900 928.800 290.600 933.100 301.200 941 318 943 343.700 936 352.200 903.400 360.700 898 369.200 892.700 343.700z" opacity=".75"/>
<path d="M1060 318.400 1081.200 324.800 1113.100 322.700 1144.900 316.300 1159.800 299.300 1204.400 292.900 1288.200 365.100 1208.600 354.500 1166.200 348.100 1060 352.400 1020 345z"/>
<path d="M930 300 978 292 982 310 944 318zM985 296 1010 290 1012 300 989 306z"/>
<path d="M1248 376 1264 378 1255 391 1247 390zM1274.500 375 1291.400 367.400 1323 386.500 1298 392zM1300 426 1330 417 1318 405z"/>
</g>
<path d="M1196.900 439.600 1176.800 498" stroke="#15173a" stroke-width="2" fill="none"/>
<path d="M1280 503 1349 478.500V493.300L1321.500 503z" fill="#0f1030"/>
<!-- white holes -->
<g fill="#fff">
<path d="M949.900 243 991.900 243 994.400 259 978.500 260.700 972.100 266.400 970 250.500 966.800 247.300 952 248.400z"/>
<path d="M956.200 269.600 973.200 266.400 977 282.300 960.500 285.100z"/>
<path d="M1023.700 243 1026.300 243 1026.300 251.500 1024.200 250.500z"/>
<path d="M960.900 322.700 984.900 319.500 989.800 343.900 964.700 348.100z"/>
<path d="M1100.300 384.400 1155.500 372.300 1161.900 373.200 1170.400 379.100 1199.100 416.300 1131.100 434.300z"/>
</g>
<!-- gray edges -->
<g fill="#8c8c8c">
<path d="M786 302.500 851 286.600 858 288 836.300 288.300 811.800 297.200 786 306.700z"/>
<path d="M978.500 260.700 993.400 259 994.400 263.200 979.600 265.300z"/>
<path d="M964.300 347 989.100 342.800 989.800 345.600 964.700 350.700z"/>
<path d="M899 293 929 288.500 929.700 291 900 296z"/>
<path d="M1132.200 235.500 1145 235.200 1146 239.400 1134.500 239.800z"/>
<path d="M1087.600 266.400 1096 262 1100 265 1122.600 262.200 1122.600 263.500 1089 268z"/>
<path d="M1199 252.200 1229.500 249.300 1234 252.300 1204 255.600z"/>
<path d="M1293.500 366 1314.800 378 1312.600 380.200 1291.400 367.400z"/>
<path d="M1153 256.500 1162 256 1164 257.500 1152 258.500z"/>
</g>
<!-- car (cyan) -->
<path d="M1094 347.100 1109.900 341.800 1131.100 346 1130.100 353.500 1113.100 356.600 1097.200 360.900z" fill="#0a9ea0"/>
<path d="M1097.200 355.600 1113.100 355.600 1113.100 360.900 1097.200 360.900z" fill="#00ffff"/>
<path d="M1109.900 333.300 1125.800 330.100 1132.200 340.700 1129 347.100 1119.400 348.100 1112 343.900z" fill="#00ffff"/>
<path d="M1140.700 324.800 1155.500 323.100 1161.900 331.200 1159.800 343.900 1156.600 345 1144.900 338.600z" fill="#0fb4b6"/>
<path d="M1150 323.700 1155.500 323.100 1161.900 331.200 1159.800 343.900 1156.600 345 1153 336z" fill="#00ffff"/>
<path d="M1160.800 335.400 1172.500 334.300 1175.700 342.800 1170.400 345 1161.900 340.700z" fill="#10e0e2"/>
<path d="M1119.400 335.400Q1121 333.500 1124 333L1152.400 325.800M1161.500 337.500 1169 336.200" stroke="#1212e8" stroke-width="1" fill="none"/>
<!-- creature -->
<path d="M1076.500 389.300 1091.800 411.200" stroke="#1414e0" stroke-width="1"/>
<g fill="#6c6c86">
<path d="M1089.400 415.800 1093 410.800 1103 408.700 1114.400 418.700 1123 428.700 1128.800 440.200 1129.500 447.300 1131 455 1128.800 464.500 1120.200 460.200 1110.100 453.100 1103 447.300 1095.800 437.300 1093 427.300z"/>
<path d="M1086.500 400.800 1088 401 1094.500 410 1091.500 412.500zM1095.800 396.500 1097 397 1099.500 408 1096.500 409z"/>
<path d="M1123 402.900 1124 408 1131 436 1128 440 1125.500 428 1122 409z"/>
<path d="M1128.800 464.500 1141.700 466.700 1135 468 1137 472 1130 468.500 1128 472 1124 466 1122 462zM1116 458 1118.700 475.300 1116.500 470 1112 460z"/>
<path d="M1093 439.500 1098 444.500 1097 446.500 1092.500 442z"/>
</g>
<path d="M1093 413 1102 410.500 1112 419.500 1121 430.500 1126 442 1120 439 1108 428 1098 420z" fill="#9c9cb4"/>
<path d="M1093 428 1100 440 1110 450 1122 458 1128.800 462 1128.800 464.500 1120.200 460.200 1110.100 453.100 1103 447.300 1095.800 437.300z" fill="#3a3a52"/>
<path d="M1103 424 1114 431 1111 433 1104 428z" fill="#3e3e58"/>
<rect x="1097.600" y="431.800" width="2.400" height="3" fill="#ff1010"/>
<!-- annotations -->
<g fill="none" stroke="#f58220" stroke-width="1.200" stroke-linejoin="miter">
<path d="M1026.100 344.100H1061.500V340.500L1096.600 349 1061.500 357.500V353.900H1026.100z"/>
<path d="M1056 438.600H1071.700V434.700L1088.200 442.400 1071.700 449.600V446H1056z"/>
</g>
<g fill="#f58220" font-family="Liberation Sans,sans-serif" font-weight="bold" font-size="14.500">
<text x="970.500" y="357.500" textLength="48.500" lengthAdjust="spacingAndGlyphs">point 1</text>
<text x="1001.500" y="446.500" textLength="48.500" lengthAdjust="spacingAndGlyphs">point 2</text>
</g>
</svg>
<!-- result scrollbars -->
<div class="abs" style="left:1349px;top:222px;width:17px;height:281px;background:#f1f1f1">
<div class="abs" style="left:2px;top:17px;width:13px;height:218px;background:#c1c1c1"></div>
<svg class="abs" style="left:0;top:0" width="17" height="281"><path d="M4.500 12.500l4-4 4 4z" fill="#505050"/><path d="M4.500 269.500l4 4 4-4z" fill="#505050"/></svg>
</div>
<div class="abs" style="left:781px;top:503px;width:568px;height:17px;background:#f1f1f1">
<div class="abs" style="left:15px;top:2px;width:513px;height:13px;background:#c1c1c1"></div>
<svg class="abs" style="left:0;top:0" width="568" height="17"><path d="M9.500 4.500l-4 4 4 4z" fill="#a3a3a3"/><path d="M557.500 4.500l4 4-4 4z" fill="#505050"/></svg>
</div>
<div class="abs" style="left:1349px;top:503px;width:17px;height:17px;background:#dcdcdc"></div>


<!-- ======= DEVTOOLS ======= -->
<div id="dev" class="abs" style="border-top:1px solid #b8b8b8">
<!-- tab bar -->
<div class="abs" style="left:0;top:0;width:1366px;height:27px;background:#f3f3f3;border-bottom:1px solid #cdcdcd"></div>
<svg class="abs" style="left:0;top:0" width="1366" height="56" viewBox="0 520 1366 56" fill="none" stroke="#5f5f5f" stroke-width="1.200">
<!-- inspect -->
<path d="M16.500 538.500H11.500Q10.500 538.500 10.500 537.500V528.500Q10.500 527.500 11.500 527.500H20.500Q21.500 527.500 21.500 528.500V532"/>
<path d="M15.500 531.500 23.500 534.700 20.300 536 22.800 539.500 21.300 540.500 18.900 537 16.800 539.200z" fill="#4a4a4a" stroke="none"/>
<!-- device -->
<rect x="40.500" y="526.500" width="10" height="14.500" rx="1.200"/><path d="M40.500 531.500H37.500Q36.500 531.500 36.500 532.500V540Q36.500 541 37.500 541H40.500"/>
<path d="M62.500 527V544" stroke="#cfcfcf" stroke-width="1"/>
<!-- right controls -->
<path d="M1303.500 527V544" stroke="#cfcfcf" stroke-width="1"/>
<circle cx="1322" cy="529.500" r="1.400" fill="#5a5a5a" stroke="none"/><circle cx="1322" cy="534.500" r="1.400" fill="#5a5a5a" stroke="none"/><circle cx="1322" cy="539.500" r="1.400" fill="#5a5a5a" stroke="none"/>
<path d="M1345.500 530.500l8 8m0-8l-8 8" stroke="#4a4a4a" stroke-width="1.600"/>
<!-- console toolbar -->
<circle cx="16.500" cy="561.500" r="5.500" stroke="#4a4a4a" stroke-width="1.500"/><path d="M12.600 557.600 20.400 565.400" stroke="#4a4a4a" stroke-width="1.500"/>
<path d="M35.500 553V571M182.500 553V571M1331.500 553V571" stroke="#cfcfcf" stroke-width="1"/>
<path d="M163.700 557.500h8.500l-4.250 7.500z" fill="#5a5a5a" stroke="none"/>
<path d="M523 557.500h8.500l-4.250 7.500z" fill="#5a5a5a" stroke="none"/>
<g transform="translate(1349.500 561.500) scale(1.150)"><use href="#gear" style="fill:#4a4a4a"/></g>
</svg>
<span class="dtab" style="left:78px">Elements</span>
<span class="dtab" style="left:145px;color:#333">Console</span>
<div class="abs" style="left:136px;top:24.500px;width:62px;height:2px;background:#3b8df6"></div>
<span class="dtab" style="left:207px">Sources</span>
<span class="dtab" style="left:268px">Network</span>
<span class="dtab" style="left:333px">Performance</span>
<span class="dtab" style="left:420.500px">Memory</span>
<span class="dtab" style="left:484px">Application</span>
<span class="dtab" style="left:563.500px">Security</span>
<span class="dtab" style="left:626px">Audits</span>
<span class="dtab" style="left:679px">AdBlock</span>
<!-- console toolbar -->
<div class="abs" style="left:0;top:27px;width:1366px;height:27px;border-bottom:1px solid #d6d6d6"></div>
<span class="dtab" style="left:45px;top:33.500px;color:#444">top</span>
<div class="abs" style="left:189px;top:31px;width:250px;height:19px;border:1px solid #d0d0d0;background:#fff"></div>
<span class="dtab" style="left:194px;top:33.500px;color:#9a9a9a">Filter</span>
<span class="dtab" style="left:447px;top:33.500px">Default levels</span>
<span class="dtab" style="left:1188px;top:33.500px;color:#9a9a9a;letter-spacing:.07px">10 items hidden by filters</span>
<!-- rows -->
<div class="crow" style="top:54px;height:23px;line-height:27px;padding-left:36px">THREE.Vector3 {<span class="key">x: </span><span class="num">-0.10614920950851747</span>, <span class="key">y: </span><span class="num">0.26690154369252994</span>, <span class="key">z: </span><span class="num">-2.3265753493295938</span>}<span class="idx" style="top:-2px">(index):189</span></div>
<div class="crow" style="top:77px;height:21px;line-height:23px;padding-left:36px">THREE.Vector3 {<span class="key">x: </span><span class="num">-0.027728275558790205</span>, <span class="key">y: </span><span class="num">2.387561699322561</span>, <span class="key">z: </span><span class="num">-2.0676764693068224</span>}<span class="idx" style="top:-1.500px">(index):189</span></div>
<svg class="abs" style="left:0;top:50px" width="800" height="70" viewBox="0 570 800 70" fill="none">
<path d="M10.300 625.500l3.800 3.700-3.800 3.700" stroke="#367cf1" stroke-width="1.500"/>
<path d="M25.300 584v7.800l6.500-3.900zM25.300 605v7.800l6.500-3.900z" fill="#6e6e6e"/>
<rect x="294.600" y="575.500" width="158.200" height="45.700" rx="10" stroke="#d02424" stroke-width="1.100"/>
<g stroke="#f58220" stroke-width="1.100">
<path d="M636.900 587.200 667.300 576.600V581.700H699.800V592.700H667.300V598.200z"/>
<path d="M608.300 610.300 630.700 605.500V607.700H669.800V613.200H630.700V615.800z"/>
</g>
<g fill="#f58220" font-family="Liberation Sans,sans-serif" font-weight="bold" font-size="14.500">
<text x="708" y="588.300" textLength="48" lengthAdjust="spacingAndGlyphs">point 1</text>
<text x="679" y="613.900" textLength="48.500" lengthAdjust="spacingAndGlyphs">point 2</text>
</g>
</svg>
</div>


<!-- ======= TASKBAR ======= -->
<div id="task" class="abs">
<svg class="abs" style="left:0;top:0" width="1366" height="40" viewBox="0 728 1366 40">
<defs>
<radialGradient id="orb" cx=".5" cy=".35" r=".7"><stop offset="0" stop-color="#7fc4f5"/><stop offset=".55" stop-color="#2a78c8"/><stop offset="1" stop-color="#0d3a78"/></radialGradient>
<linearGradient id="tbtn" x1="0" y1="0" x2="0" y2="1"><stop offset="0" stop-color="#6a6e74"/><stop offset=".48" stop-color="#45484d"/><stop offset=".52" stop-color="#2a2c30"/><stop offset="1" stop-color="#3a3d42"/></linearGradient>
<linearGradient id="tbtn0" x1="0" y1="0" x2="0" y2="1"><stop offset="0" stop-color="#4c4f54"/><stop offset=".48" stop-color="#2e3034"/><stop offset=".52" stop-color="#17191b"/><stop offset="1" stop-color="#222428"/></linearGradient>
<linearGradient id="tbtn2" x1="0" y1="0" x2="0" y2="1"><stop offset="0" stop-color="#a8abb0"/><stop offset=".48" stop-color="#7d8085"/><stop offset=".52" stop-color="#55585c"/><stop offset="1" stop-color="#7a7d82"/></linearGradient>
<radialGradient id="ecl" cx=".5" cy=".3" r=".75"><stop offset="0" stop-color="#b79be0"/><stop offset=".6" stop-color="#5a3a9a"/><stop offset="1" stop-color="#2a1660"/></radialGradient>
</defs>
<!-- start orb -->
<circle cx="27" cy="748" r="19" fill="url(#orb)" stroke="#16304e" stroke-width="1.500"/><path d="M12 757a17.500 17.500 0 0 0 30 0a22 22 0 0 1-30 0z" fill="#3fd0f5" opacity=".7"/>
<path d="M17.500 741.500q4-2 8-.5l-1.800 6.500q-4-1.500-8 .5z" fill="#f25a1c"/>
<path d="M27.500 741.800q4 1.500 8-.5l-1.800 6.500q-4 2-8 .500z" fill="#7dc242"/>
<path d="M15.200 750q4-2 8-.5l-1.800 6.500q-4-1.500-8 .5z" fill="#2a9be8"/>
<path d="M25.200 750.300q4 1.500 8-.5l-1.800 6.500q-4 2-8 .500z" fill="#fbc314"/>
<!-- explorer button -->
<rect x="60.500" y="729.500" width="52" height="38" rx="2.500" fill="url(#tbtn0)" stroke="#9a9da2" stroke-width="1"/>
<rect x="115.500" y="729.500" width="3" height="38" rx="1" fill="#3a3d42" stroke="#777a80" stroke-width=".8"/>
<path d="M70 739h12l3 3h18v21H70z" fill="#e9c66a"/><path d="M70 744h34v19H70z" fill="#f7e29c"/>
<path d="M75 736.500h3v2.500h-3z" fill="#2fae3a"/><path d="M82 737.500h3v2.500h-3z" fill="#d8342c"/><path d="M90 738.500h3v2.500h-3z" fill="#3a7fe0"/>
<path d="M75.500 752.500h23v4.500h-4v6h-15v-6h-4z" fill="#5aa4e8" stroke="#2a6ab0" stroke-width=".8"/><path d="M80 757.500h14v6H80z" fill="#dff0ff"/>
<!-- wmp -->
<path d="M139.500 738.500h20v21h-20z" fill="#7fb2e6"/><path d="M137 740.500h20v21h-20z" fill="#a9cdf2" stroke="#5a90cc" stroke-width=".8"/>
<circle cx="147.500" cy="750.500" r="8" fill="#f5821e"/><path d="M145 746l7.500 4.500-7.500 4.500z" fill="#fff"/>
<!-- eclipse purple -->
<circle cx="213" cy="748" r="15.500" fill="url(#ecl)"/>
<path d="M198.500 745h29M198 748.500h30M198.500 752h29" stroke="#fff" stroke-width="1.600"/>
<!-- eclipse dark -->
<circle cx="272" cy="748" r="15" fill="#f7941e"/><circle cx="276.500" cy="748" r="15" fill="#2c2255"/>
<path d="M262.500 744.500h28M262 748h29M262.500 751.500h28" stroke="#fff" stroke-width="1.700"/>
<!-- green app -->
<circle cx="337" cy="748" r="16" fill="#5bb030"/>
<path d="M325 741h9l-2.500 7h-1v7h2.500v2h-7v-2h2.500v-7h-1zM340 741h9l-2.500 7h-1v7h2.500v2h-7v-2h2.500v-7h-1zM333 744h8v3l2 10h-12l2-10z" fill="#fff"/>
<!-- firefox -->
<circle cx="398" cy="748.500" r="15" fill="#2a4ea8"/>
<path d="M386 738q-4.500 6-2.500 14 2.500 9 11.500 11.500 10 2 16-5.500 4-6 2-13-1-4-4-7 1.500 5-1 7-2.500-5-8-5.500 2 2.500 1.500 5-3 .5-4 3 1.500 1.500 4 1-1 4-5 4-4-.5-5-4.500-.5-2 1-3.500-2.500 0-3.500 2-1.500-4 .5-8.500z" fill="#f5821e"/>
<path d="M388 741q-3 5-1.500 10.500 2 7 9.500 9 8 1.500 12.500-4.500-6 4-11.500 2-6.500-3-7-9.500z" fill="#e8452c"/>
<path d="M404 739q4 4 4.500 9 .5-5.500-2-9z" fill="#fbd03a"/>
<!-- chrome 1 -->
<rect x="431.500" y="729.500" width="58" height="38" rx="2.500" fill="url(#tbtn)" stroke="#8a8d92" stroke-width="1"/>
<g transform="translate(460 748)"><circle r="14.500" fill="#f2c31b"/><path d="M0 0-12.560-7.250A14.500 14.500 0 0 1 12.560-7.250z" fill="#dc4437"/><path d="M0 0-12.560-7.250A14.500 14.500 0 0 0 0 14.500L6 3z" fill="#1ea05a"/><circle r="6.800" fill="#fff"/><circle r="5.400" fill="#4a8af4"/></g>
<rect x="461.500" y="750.500" width="15" height="14" rx="1" fill="#cfcfcf"/><circle cx="469" cy="755" r="2.500" fill="#8a8a8a"/><path d="M464.500 763q0-4.500 4.500-4.500t4.500 4.500z" fill="#8a8a8a"/>
<!-- chrome 2 -->
<rect x="493.500" y="729.500" width="58" height="38" rx="2.500" fill="url(#tbtn2)" stroke="#c2c5c9" stroke-width="1"/>
<g transform="translate(522 748)"><circle r="14.500" fill="#f2c31b"/><path d="M0 0-12.560-7.250A14.500 14.500 0 0 1 12.560-7.250z" fill="#dc4437"/><path d="M0 0-12.560-7.250A14.500 14.500 0 0 0 0 14.500L6 3z" fill="#1ea05a"/><circle r="6.800" fill="#fff"/><circle r="5.400" fill="#4a8af4"/></g>
<g transform="translate(531 757)"><circle r="6" fill="#fff"/><circle r="2.300" fill="#f0b400"/><path d="M-6 4l-3 4h6z" fill="#3a9a30"/></g>
<!-- java ee -->
<rect x="556.500" y="729.500" width="58" height="38" rx="2.500" fill="url(#tbtn)" stroke="#8a8d92" stroke-width="1"/>
<rect x="570" y="732" width="31" height="32" fill="#4a3478"/>
<g transform="translate(585.500 748)"><circle r="11" fill="none" stroke="#d8d8d8" stroke-width="4.500" stroke-dasharray="4.600 4"/><circle r="8.500" fill="none" stroke="#d8d8d8" stroke-width="3"/></g>
<!-- sublime -->
<rect x="618.500" y="729.500" width="58" height="38" rx="2.500" fill="url(#tbtn)" stroke="#8a8d92" stroke-width="1"/>
<rect x="632" y="734.500" width="29" height="25" rx="2.500" fill="#e9e9e9"/><rect x="634.500" y="733" width="24" height="21" rx="2.500" fill="#4a4a4a"/>
<!-- tray -->
<path d="M1179.500 751.500h8l-4-5z" fill="#fff"/>
<path d="M1201.500 742v16" stroke="#fff" stroke-width="1.500"/><path d="M1203 742.500q3.500-1.500 6 0v7q-2.500-1.500-6 0zM1210 744q2.500 1.200 5 0v6q-2.500 1.200-5 0z" fill="#fff"/>
<path d="M1229.500 745.500h9.500v8h-9.500zM1232 756.500h5M1234.500 753.500v3" fill="none" stroke="#fff" stroke-width="1.400"/><path d="M1226.500 742v12h3" fill="none" stroke="#fff" stroke-width="1.300"/><rect x="1225" y="741" width="3.500" height="5" fill="#fff"/>
<path d="M1249 746.500h3l3.500-4v13l-3.500-4h-3z" fill="#e6e6e6"/>
<circle cx="1259.500" cy="752.500" r="4.300" fill="#e0201c"/><path d="M1257.700 750.700l3.600 3.600m0-3.600l-3.600 3.600" stroke="#fff" stroke-width="1.300"/>
<!-- show desktop -->
<rect x="1352.500" y="727.500" width="14" height="41" fill="#2a2e34" stroke="#6a6e74" stroke-width="1"/>
</svg>
<div class="abs" style="left:566px;top:9px;width:40px;text-align:center;font-size:9.400px;line-height:10px;font-weight:bold;color:#f7941e;letter-spacing:-.4px;white-space:nowrap;text-shadow:0 0 1px #000,0 0 1px #000,0 0 2px #000">Java EE<br>IDE</div>
<div class="abs" style="left:634px;top:5px;width:25px;text-align:center;font-size:16px;line-height:20px;font-weight:bold;color:#f7941e">S</div>
<div class="abs" style="left:1270px;top:6px;width:82px;text-align:center;font-size:11.600px;line-height:14px;color:#fff">15:48</div>
<div class="abs" style="left:1270px;top:23px;width:82px;text-align:center;font-size:11.400px;line-height:14px;color:#fff">13-12-2017</div>
</div>


</div>
</body>
</html>
